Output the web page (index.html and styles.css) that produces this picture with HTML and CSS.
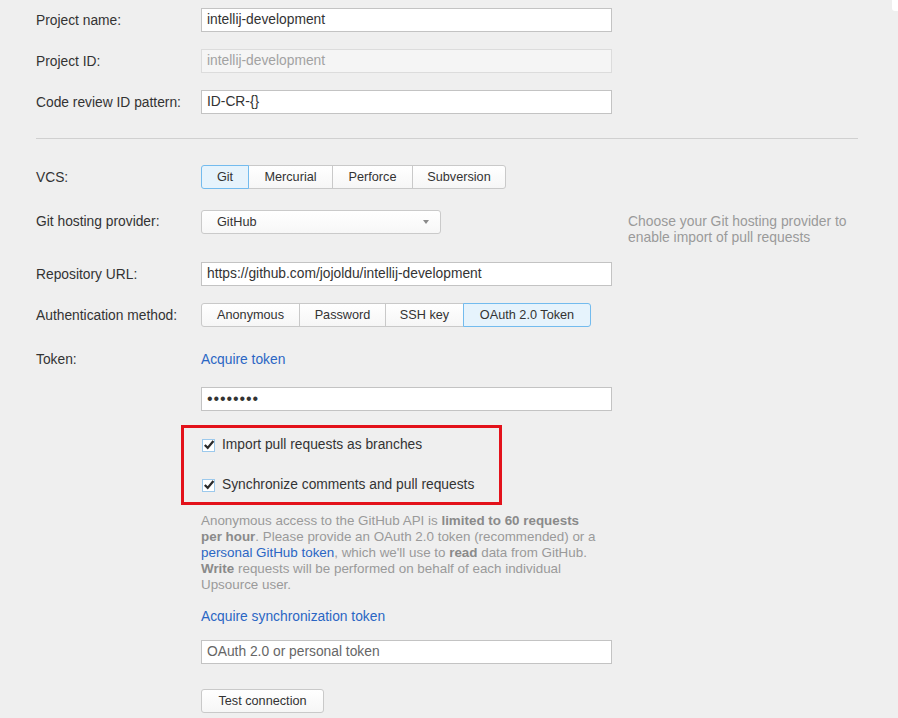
FILE: index.html
```html
<!DOCTYPE html>
<html>
<head>
<meta charset="utf-8">
<link rel="stylesheet" href="styles.css">
</head>
<body>
<div class="corner"></div>
<div class="page">
  <div class="row r1">
    <div class="label">Project name:</div>
    <div class="input">intellij-development</div>
  </div>
  <div class="row r2">
    <div class="label">Project ID:</div>
    <div class="input disabled">intellij-development</div>
  </div>
  <div class="row r3">
    <div class="label">Code review ID pattern:</div>
    <div class="input">ID-CR-{}</div>
  </div>
  <div class="divider"></div>
  <div class="row r4">
    <div class="label">VCS:</div>
    <div class="seg">
      <span class="btn sel w-git">Git</span><span class="btn w-hg">Mercurial</span><span class="btn w-p4">Perforce</span><span class="btn w-svn">Subversion</span>
    </div>
  </div>
  <div class="row r5">
    <div class="label">Git hosting provider:</div>
    <div class="select"><span>GitHub</span><span class="arrow"></span></div>
    <div class="hint">Choose your Git hosting provider to enable import of pull requests</div>
  </div>
  <div class="row r6">
    <div class="label">Repository URL:</div>
    <div class="input">https://github.com/jojoldu/intellij-development</div>
  </div>
  <div class="row r7">
    <div class="label">Authentication method:</div>
    <div class="seg">
      <span class="btn w-anon">Anonymous</span><span class="btn w-pw">Password</span><span class="btn w-ssh">SSH key</span><span class="btn sel w-oauth">OAuth 2.0 Token</span>
    </div>
  </div>
  <div class="row r8 textrow">
    <div class="label">Token:</div>
    <a class="link">Acquire token</a>
  </div>
  <div class="field r9">
    <div class="input dots">••••••••</div>
  </div>
  <div class="highlight">
    <div class="check"><span class="box"><svg width="12" height="12" viewBox="0 0 12 12"><path d="M1.8 6 L4.7 8.9 L10.4 1.9" fill="none" stroke="#2b2b2b" stroke-width="2.3"/></svg></span>Import pull requests as branches</div>
    <div class="check"><span class="box"><svg width="12" height="12" viewBox="0 0 12 12"><path d="M1.8 6 L4.7 8.9 L10.4 1.9" fill="none" stroke="#2b2b2b" stroke-width="2.3"/></svg></span>Synchronize comments and pull requests</div>
  </div>
  <p class="note">Anonymous access to the GitHub API is <b>limited to 60 requests per hour</b>. Please provide an OAuth 2.0 token (recommended) or a <a class="link">personal GitHub token</a>, which we'll use to <b>read</b> data from GitHub. <b>Write</b> requests will be performed on behalf of each individual Upsource user.</p>
  <div class="field r10">
    <a class="link">Acquire synchronization token</a>
  </div>
  <div class="field r11">
    <div class="input placeholder">OAuth 2.0 or personal token</div>
  </div>
  <div class="field r12">
    <span class="btn single">Test connection</span>
  </div>
</div>
</body>
</html>
```

FILE: styles.css
```css
html, body {
  margin: 0;
  padding: 0;
  background: #efefef;
  height: 718px;
  overflow: hidden;
}
body {
  font-family: "Liberation Sans", Arial, sans-serif;
  font-size: 13.8px;
  color: #333;
  position: relative;
}
.corner {
  position: absolute;
  right: 0;
  top: 0;
  width: 6px;
  height: 11px;
  background: #fff;
  border-bottom-left-radius: 3px;
}
.page {
  padding: 8px 40px 0 36px;
}
.row {
  display: flex;
  align-items: center;
  height: 24px;
}
.label {
  width: 165px;
  flex: none;
}
.field {
  margin-left: 165px;
}
.input {
  box-sizing: border-box;
  flex: none;
  width: 411px;
  height: 24px;
  background: #fff;
  border: 1px solid #c3c3c3;
  padding: 0 5px;
  line-height: 22px;
  white-space: nowrap;
  color: #333;
}
.input.disabled {
  background: #f5f5f5;
  border-color: #dcdcdc;
  color: #a2a2a2;
}
.input.placeholder {
  color: #666;
}
.input.dots {
  font-size: 16px;
  letter-spacing: 0.9px;
  color: #333;
}
.r2 { margin-top: 17px; }
.r3 { margin-top: 17px; }
.divider {
  height: 1px;
  background: #d0d0d0;
  margin-top: 24px;
}
.r4 { margin-top: 26px; }
.r5 { margin-top: 21px; align-items: flex-start; }
.r5 .label { line-height: 24px; }
.r6 { margin-top: 28px; }
.r7 { margin-top: 17px; }
.textrow { height: 16px; line-height: 16px; }
.r8 { margin-top: 25px; }
.r9 { margin-top: 19px; }

.seg {
  display: flex;
  flex: none;
}
.btn {
  box-sizing: border-box;
  height: 24px;
  line-height: 22px;
  font-size: 12.7px;
  color: #333;
  text-align: center;
  background: linear-gradient(#ffffff, #f6f6f6);
  border: 1px solid #c9c9c9;
  margin-left: -1px;
  white-space: nowrap;
}
.seg .btn:first-child {
  margin-left: 0;
  border-radius: 3px 0 0 3px;
}
.seg .btn:last-child {
  border-radius: 0 3px 3px 0;
}
.btn.sel {
  background: #e6f3fc;
  border-color: #73bbee;
  position: relative;
  z-index: 1;
}
.w-git { width: 48px; }
.w-hg { width: 85px; }
.w-p4 { width: 81px; }
.w-svn { width: 94px; }
.w-anon { width: 99px; }
.w-pw { width: 87px; }
.w-ssh { width: 79px; }
.w-oauth { width: 128px; }
.btn.single {
  display: inline-block;
  width: 123px;
  margin-left: 0;
  border-radius: 3px;
}

.select {
  box-sizing: border-box;
  flex: none;
  width: 240px;
  height: 24px;
  display: flex;
  align-items: center;
  justify-content: space-between;
  padding: 0 11px 0 15px;
  background: linear-gradient(#ffffff, #f7f7f7);
  border: 1px solid #cacaca;
  border-radius: 3px;
  font-size: 12.7px;
}
.arrow {
  width: 0;
  height: 0;
  border-left: 3.5px solid transparent;
  border-right: 3.5px solid transparent;
  border-top: 4px solid #8a8a8a;
}
.hint {
  margin-left: 187px;
  margin-top: 3px;
  width: 250px;
  flex: none;
  line-height: 16px;
  color: #9a9a9a;
  font-size: 13.9px;
}

.link {
  color: #2a66c4;
  text-decoration: none;
}

.highlight {
  box-sizing: border-box;
  margin-top: 14px;
  margin-left: 145px;
  width: 321px;
  height: 80px;
  border: 3px solid #e3121b;
  padding: 9px 0 0 18px;
}
.check {
  display: flex;
  align-items: center;
  height: 16px;
  line-height: 16px;
}
.check + .check {
  margin-top: 24px;
}
.box {
  box-sizing: border-box;
  width: 13px;
  height: 13px;
  background: #fff;
  border: 1px solid #9cc9ec;
  margin-right: 7px;
  display: flex;
  align-items: center;
  justify-content: center;
  overflow: visible;
}
.box svg {
  display: block;
  flex: none;
}

.note {
  margin: 8px 0 0 165px;
  width: 399px;
  font-size: 13.4px;
  line-height: 16px;
  color: #9a9a9a;
}
.note b {
  color: #8a8a8a;
}
.r10 {
  margin-top: 16px;
  line-height: 16px;
}
.r11 { margin-top: 15px; }
.r12 { margin-top: 25px; }
```
